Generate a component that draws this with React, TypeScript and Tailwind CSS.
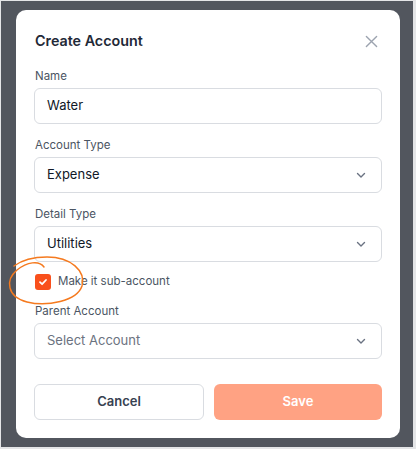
import { useState } from "react";

function Chevron() {
  return (
    <svg className="h-3 w-3 text-gray-500" viewBox="0 0 12 12" fill="none" stroke="currentColor" strokeWidth={1.4}>
      <path strokeLinecap="round" strokeLinejoin="round" d="M2.5 4.5 6 8l3.5-3.5" />
    </svg>
  );
}

function Field({ label, children }: { label: string; children: React.ReactNode }) {
  return (
    <div className="flex flex-col gap-1">
      <label className="pl-[1px] text-[11.5px] leading-4 text-[#4b5563]">{label}</label>
      {children}
    </div>
  );
}

function SelectBox({ value, placeholder }: { value?: string; placeholder?: string }) {
  return (
    <div className="flex h-9 items-center justify-between rounded-md border border-[#d9dce1] bg-white pl-3 pr-[14px]">
      {value ? (
        <span className="text-[13px] text-[#111827]">{value}</span>
      ) : (
        <span className="text-[13px] text-[#6b7280]">{placeholder}</span>
      )}
      <Chevron />
    </div>
  );
}

export default function App() {
  const [sub, setSub] = useState(true);

  return (
    <div
      className="relative h-[449px] w-[416px] border-l border-t border-r-[3px] border-b-[2px] border-[#e4e5e7] bg-[#52565e] pl-[15px] pt-[9px]"
      style={{ fontFamily: "Inter, 'Liberation Sans', sans-serif" }}
    >
      {/* Modal */}
      <div className="flex h-[428px] w-[384px] flex-col rounded-[10px] bg-white px-[18px] pt-5">
        <div className="flex h-[22px] items-center justify-between pl-[1px]">
          <h2 className="text-[14.3px] font-semibold text-[#1f2937]">Create Account</h2>
          <svg className="mr-[4px] h-[13px] w-[13px] text-[#9ca3af]" viewBox="0 0 14 14" fill="none" stroke="currentColor" strokeWidth={1.5}>
            <path strokeLinecap="round" d="M1.5 1.5l11 11M12.5 1.5l-11 11" />
          </svg>
        </div>

        <div className="mt-4 flex flex-col gap-[13px]">
          <Field label="Name">
            <div className="flex h-9 items-center rounded-md border border-[#d9dce1] bg-white pl-3">
              <span className="text-[13px] text-[#111827]">Water</span>
            </div>
          </Field>
          <Field label="Account Type">
            <SelectBox value="Expense" />
          </Field>
          <Field label="Detail Type">
            <SelectBox value="Utilities" />
          </Field>
        </div>

        {/* Sub-account checkbox */}
        <button onClick={() => setSub(!sub)} className="mt-3 flex h-4 items-center gap-[7px] pl-[1px]">
          <span className={`flex h-4 w-4 items-center justify-center rounded-[3px] ${sub ? "bg-[#f9501c]" : "border border-gray-300"}`}>
            {sub && (
              <svg className="h-[10px] w-[10px]" viewBox="0 0 10 10" fill="none" stroke="white" strokeWidth={1.8}>
                <path strokeLinecap="round" strokeLinejoin="round" d="M2 5.2 4.1 7.2 8 3" />
              </svg>
            )}
          </span>
          <span className="text-[11.5px] text-[#4b5563]">Make it sub-account</span>
        </button>

        <div className="mt-[13px]">
          <Field label="Parent Account">
            <SelectBox placeholder="Select Account" />
          </Field>
        </div>

        <div className="mt-[25px] flex gap-[10px]">
          <button className="h-9 flex-1 rounded-md border border-[#d9dce1] bg-white text-[13px] font-semibold text-[#374151]">
            Cancel
          </button>
          <button className="h-9 flex-1 rounded-md bg-[#ffa283] text-[13px] font-semibold text-white">
            Save
          </button>
        </div>
      </div>

      {/* hand-drawn annotation */}
      <svg className="pointer-events-none absolute left-0 top-0" width="416" height="449" fill="none">
        <path
          d="M43 266 C38 259 26 261 16 269 C4 279 6 296 26 301 C46 306 76 300 81 285 C85 270 70 256 46 256 C32 256 21 259 13 265"
          stroke="#f57a1f"
          strokeWidth={1.5}
          strokeLinecap="round"
        />
      </svg>
    </div>
  );
}
